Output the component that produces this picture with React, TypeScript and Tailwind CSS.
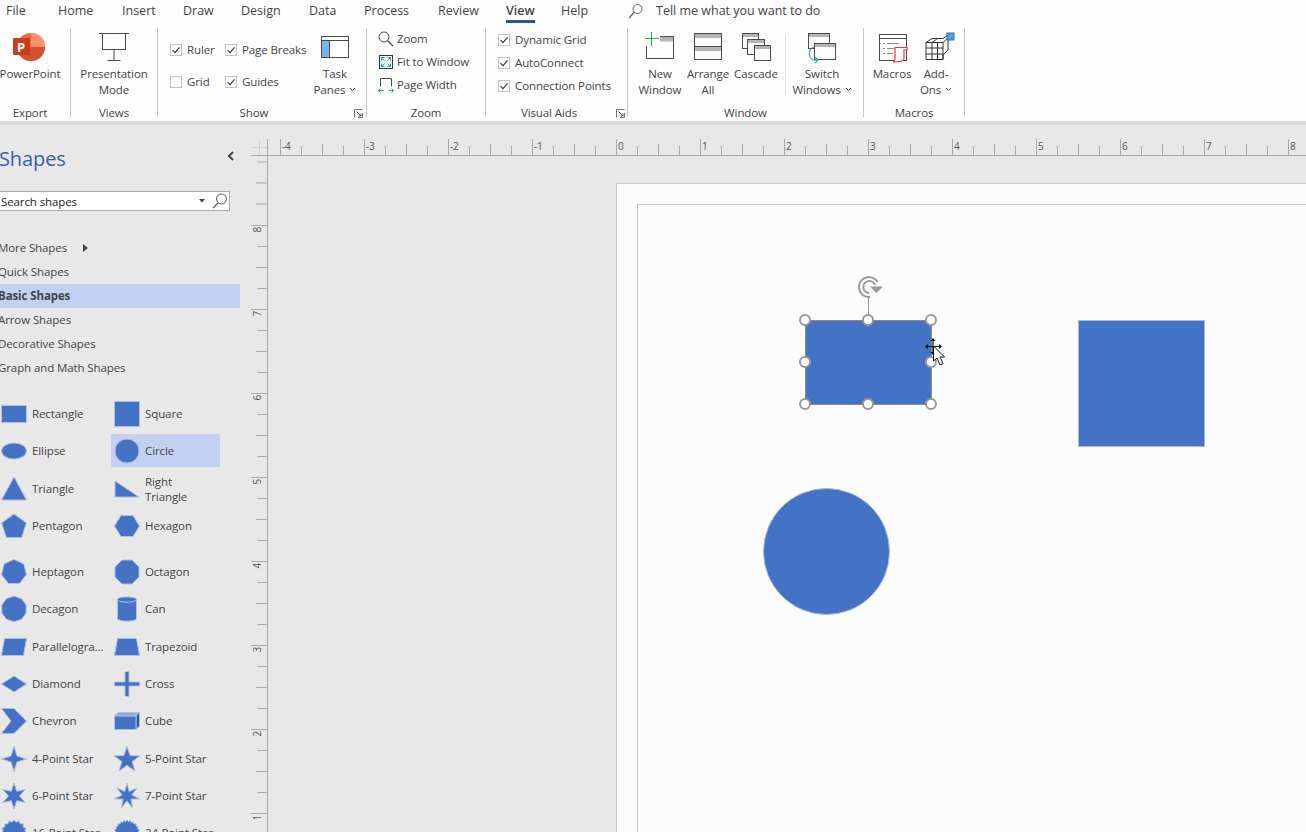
import type { ReactNode } from "react";

const tabs = [
  { name: "File", w: "w-[52px]" },
  { name: "Home", w: "w-[64px]" },
  { name: "Insert", w: "w-[61px]" },
  { name: "Draw", w: "w-[58px]" },
  { name: "Design", w: "w-[68px]" },
  { name: "Data", w: "w-[55px]" },
  { name: "Process", w: "w-[74px]" },
  { name: "Review", w: "w-[68px]" },
  { name: "View", w: "w-[55px]" },
  { name: "Help", w: "w-[67px]" },
];

const INK = "#4a4a4a";

function Sep() {
  return <div className="w-px h-[89px] bg-[#c9c9c9] shrink-0" />;
}

function Check({ on = true, label }: { on?: boolean; label: string }) {
  return (
    <div className="flex items-center gap-[5px] h-[16px] whitespace-nowrap">
      <div className="w-[12px] h-[12px] border border-[#c4c4c4] bg-white flex items-center justify-center shrink-0">
        {on && (
          <svg width="10" height="10" viewBox="0 0 10 10" fill="none">
            <path d="M1.5 5.2 L4 7.6 L8.5 2.4" stroke="#333" strokeWidth="1.1" />
          </svg>
        )}
      </div>
      <span>{label}</span>
    </div>
  );
}

function Chevron() {
  return (
    <svg width="7" height="5" viewBox="0 0 7 5" fill="none" className="inline-block ml-[4px] mb-[2px]">
      <path d="M1 1 L3.5 3.5 L6 1" stroke="#444" strokeWidth="1" />
    </svg>
  );
}

function Launcher() {
  return (
    <svg width="9" height="9" viewBox="0 0 9 9" fill="none" className="shrink-0">
      <path d="M0.5 8.5 V0.5 H8.5 M8.5 4 V8.5 H4" stroke="#777" strokeWidth="1" />
      <path d="M2.5 2.5 L7 7 M7 4.5 V7 H4.5" stroke="#555" strokeWidth="1" />
    </svg>
  );
}

function Large({ w, icon, children }: { w: string; icon: ReactNode; children: ReactNode }) {
  return (
    <div className={`${w} shrink-0 flex flex-col items-center text-center leading-[16px] whitespace-nowrap`}>
      <div className="h-[30px] w-[30px] mt-[4px] mb-[4px] flex items-center justify-center overflow-visible">{icon}</div>
      {children}
    </div>
  );
}

function Icon30({ children }: { children: ReactNode }) {
  return (
    <svg width="30" height="30" viewBox="0 0 30 30" fill="none" className="overflow-visible">
      {children}
    </svg>
  );
}

function Win({ x, y, w, h, bar = 4 }: { x: number; y: number; w: number; h: number; bar?: number }) {
  return (
    <g>
      <rect x={x} y={y} width={w} height={h} fill="#fdfdfd" stroke={INK} />
      <rect x={x + 0.5} y={y + 0.5} width={w - 1} height={bar} fill="#b5b5b5" />
    </g>
  );
}

const shapeFill = "#4472c4";
const shapeLine = "#b3bfd8";

function Poly({ points }: { points: string }) {
  return <polygon points={points} fill={shapeFill} stroke={shapeLine} strokeWidth="1" />;
}

// regular polygon / star outline in the 26x26 stencil box
function ngon(n: number, r: number, cx = 13, cy = 13, start = -90) {
  const out: string[] = [];
  for (let i = 0; i < n; i++) {
    const a = ((start + (360 / n) * i) * Math.PI) / 180;
    out.push(`${(cx + r * Math.cos(a)).toFixed(2)},${(cy + r * Math.sin(a)).toFixed(2)}`);
  }
  return out.join(" ");
}

function star(n: number, r: number, inner: number, cx = 13, cy = 13) {
  const out: string[] = [];
  for (let i = 0; i < n * 2; i++) {
    const a = ((-90 + (180 / n) * i) * Math.PI) / 180;
    const d = i % 2 === 0 ? r : inner;
    out.push(`${(cx + d * Math.cos(a)).toFixed(2)},${(cy + d * Math.sin(a)).toFixed(2)}`);
  }
  return out.join(" ");
}

const shapeIcons: Record<string, ReactNode> = {
  Rectangle: <rect x="0.5" y="4.5" width="25" height="17" fill={shapeFill} stroke={shapeLine} />,
  Square: <rect x="0.5" y="0.5" width="25" height="25" fill={shapeFill} stroke={shapeLine} />,
  Ellipse: <ellipse cx="13" cy="13" rx="12.5" ry="8" fill={shapeFill} stroke={shapeLine} />,
  Circle: <circle cx="13" cy="13" r="12" fill={shapeFill} stroke={shapeLine} />,
  Triangle: <Poly points="13,1 25.5,24 0.5,24" />,
  "Right Triangle": <Poly points="1,5 25,21 1,21" />,
  Pentagon: <Poly points={ngon(5, 13, 13, 14)} />,
  Hexagon: <Poly points="7,2.5 19,2.5 25.5,13 19,23.5 7,23.5 0.5,13" />,
  Heptagon: <Poly points={ngon(7, 12.7)} />,
  Octagon: <Poly points={ngon(8, 13, 13, 13, -67.5)} />,
  Decagon: <Poly points={ngon(10, 12.8)} />,
  Can: (
    <g>
      <path d="M3.5 3.5 C3.5 0 22.5 0 22.5 3.5 V22.5 C22.5 26 3.5 26 3.5 22.5 Z" fill={shapeFill} stroke={shapeLine} />
      <path d="M3.5 3.5 C3.5 7 22.5 7 22.5 3.5" stroke={shapeLine} fill="none" />
    </g>
  ),
  "Parallelogra...": <Poly points="3.5,4.5 25.5,4.5 22.5,21.5 0.5,21.5" />,
  Trapezoid: <Poly points="3.5,4.5 22.5,4.5 25.5,21.5 0.5,21.5" />,
  Diamond: <Poly points="13,5 25.5,13 13,21 0.5,13" />,
  Cross: <Poly points="11,0.5 15,0.5 15,11 25.5,11 25.5,15 15,15 15,25.5 11,25.5 11,15 0.5,15 0.5,11 11,11" />,
  Chevron: <Poly points="0.5,0.5 13,0.5 25.5,13 13,25.5 0.5,25.5 10,13" />,
  Cube: (
    <g>
      <polygon points="0.5,8 4,4.5 25.5,4.5 22,8" fill="#8ea9db" stroke={shapeLine} />
      <polygon points="22,8 25.5,4.5 25.5,18 22,21.5" fill="#2f5597" stroke={shapeLine} />
      <rect x="0.5" y="8" width="21.5" height="13.5" fill={shapeFill} stroke={shapeLine} />
    </g>
  ),
  "4-Point Star": <Poly points="13,0.5 16,10 25.5,13 16,16 13,25.5 10,16 0.5,13 10,10" />,
  "5-Point Star": <Poly points={star(5, 13.5, 5.4, 13, 14)} />,
  "6-Point Star": <Poly points={star(6, 13, 5.5)} />,
  "7-Point Star": <Poly points={star(7, 13, 5)} />,
  "16-Point Star": <Poly points={star(16, 13, 11)} />,
  "24-Point Star": <Poly points={star(24, 13, 11.4)} />,
};

const stencilRows = [
  { mt: "", left: "Rectangle", right: "Square" },
  { mt: "", left: "Ellipse", right: "Circle" },
  { mt: "mt-px", left: "Triangle", right: "Right Triangle" },
  { mt: "", left: "Pentagon", right: "Hexagon" },
  { mt: "mt-[9px]", left: "Heptagon", right: "Octagon" },
  { mt: "", left: "Decagon", right: "Can" },
  { mt: "mt-px", left: "Parallelogra...", right: "Trapezoid" },
  { mt: "", left: "Diamond", right: "Cross" },
  { mt: "", left: "Chevron", right: "Cube" },
  { mt: "mt-px", left: "4-Point Star", right: "5-Point Star" },
  { mt: "", left: "6-Point Star", right: "7-Point Star" },
  { mt: "", left: "16-Point Star", right: "24-Point Star" },
];

function Stencil({ name }: { name: string }) {
  const on = name === "Circle";
  return (
    <div className={`w-[109px] h-[33px] flex items-center pl-[3px] gap-[5px] shrink-0 ${on ? "bg-[#c3d0f1]" : ""}`}>
      <svg width="26" height="26" viewBox="0 0 26 26" className="shrink-0 overflow-visible">
        {shapeIcons[name]}
      </svg>
      <span className={name === "Right Triangle" ? "leading-[15px] w-[50px]" : "whitespace-nowrap"}>{name}</span>
    </div>
  );
}

function TopRuler() {
  const labels = [-4, -3, -2, -1, 0, 1, 2, 3, 4, 5, 6, 7, 8];
  return (
    <svg width="1056" height="31" viewBox="0 0 1056 31" className="block shrink-0">
      <path d="M9.5 14 V30 M2 22.5 H17" stroke="#d2d2d2" />
      <path d="M1 30.5 H1056 M17.5 14 V30" stroke="#a9a9a9" />
      {labels.map((n) => {
        const x = 366.5 + n * 84;
        return (
          <g key={n}>
            <path d={`M${x} 14 V30 M${x + 21} 21 V30 M${x + 42} 19 V30 M${x + 63} 21 V30`} stroke="#a9a9a9" />
            <text x={x + 1.5} y="25" className="text-[10px] fill-[#555]">
              {n}
            </text>
          </g>
        );
      })}
    </svg>
  );
}

function SideRuler() {
  const labels = [8, 7, 6, 5, 4, 3, 2, 1];
  return (
    <svg width="18" height="676" viewBox="0 0 18 676" className="block shrink-0">
      <path d="M17.5 0 V676" stroke="#a9a9a9" />
      <path d="M8 6 H17 M6 27 H17 M6 48 H17" stroke="#a9a9a9" />
      {labels.map((n) => {
        const y = 69.5 + (8 - n) * 84;
        return (
          <g key={n}>
            <path d={`M1 ${y} H17 M8 ${y + 21} H17 M6 ${y + 42} H17 M8 ${y + 63} H17`} stroke="#a9a9a9" />
            <text transform={`translate(11 ${y + 7}) rotate(-90)`} className="text-[10px] fill-[#555]">
              {n}
            </text>
          </g>
        );
      })}
    </svg>
  );
}

function Handle({ x, y }: { x: number; y: number }) {
  return <circle cx={x} cy={y} r="5" fill="#fff" stroke="#999" strokeWidth="2" />;
}

// shapes on the drawing page, in screen coordinates
function Drawing() {
  return (
    <svg width="668" height="627" viewBox="638 205 668 627" className="absolute left-0 top-0">
      <rect x="1078.5" y="320.5" width="126" height="126" fill={shapeFill} stroke="#a9bbdc" />
      <circle cx="826.5" cy="551.5" r="63" fill={shapeFill} stroke="#a9bbdc" />
      <rect x="805.5" y="320.5" width="126" height="84" fill={shapeFill} stroke="#8c8c8c" strokeWidth="1" />
      <path d="M868.5 296 V316" stroke="#999" />
      <path d="M877.5 282 A10 10 0 1 0 870 297" stroke="#999" strokeWidth="2" fill="none" />
      <path d="M875 285 A6 6 0 1 0 869 293" stroke="#999" strokeWidth="2" fill="none" />
      <path d="M870 286.5 H883 L876.5 293 Z" fill="#999" />
      <Handle x={805} y={320} />
      <Handle x={868} y={320} />
      <Handle x={931} y={320} />
      <Handle x={805} y={362} />
      <Handle x={931} y={362} />
      <Handle x={805} y={404} />
      <Handle x={868} y={404} />
      <Handle x={931} y={404} />
      {/* move cursor */}
      <path d="M933 339 V354 M925.5 346.5 H941" stroke="#111" strokeWidth="1.2" />
      <path d="M933 338 L935.5 341 H930.5 Z M933 355 L935.5 352 H930.5 Z M925 346.5 L928 344 V349 Z M942 346.5 L939 344 V349 Z" fill="#111" />
      <path d="M933.5 346 V361 L937 358 L940 365 L943 363.5 L940 357 H944.5 Z" fill="#fff" stroke="#111" strokeWidth="1" />
    </svg>
  );
}

export default function App() {
  return (
    <div className="w-[1306px] h-[832px] overflow-hidden bg-[#e8e8e8] flex flex-col text-[11.5px] tracking-[-0.1px] text-[#444] font-['Open_Sans',sans-serif]">
      {/* Ribbon */}
      <div className="h-[121px] bg-[#fdfdfd] shrink-0">
        <div className="h-[28px] flex pl-[6px] pt-px text-[12.5px] tracking-normal">
          {tabs.map((t) => (
            <div key={t.name} className={`${t.w} shrink-0`}>
              {t.name === "View" ? (
                <div className="inline-block h-[22px] leading-[20px] font-semibold border-b-[3px] border-[#2f5297]">{t.name}</div>
              ) : (
                <div className="leading-[20px]">{t.name}</div>
              )}
            </div>
          ))}
          <div className="w-[28px] pt-[2px]">
            <svg width="16" height="16" viewBox="0 0 16 16" fill="none">
              <circle cx="9.5" cy="6" r="4.5" stroke="#666" />
              <path d="M6 9.5 L1 15" stroke="#666" strokeWidth="1.2" />
            </svg>
          </div>
          <div className="leading-[20px]">Tell me what you want to do</div>
        </div>

        <div className="flex h-[93px]">
          {/* Export */}
          <div className="w-[70px] shrink-0 flex flex-col">
            <div className="h-[77px] w-[60px]">
              <Large
                w="w-[60px]"
                icon={
                  <svg width="34" height="30" viewBox="0 0 34 30" className="overflow-visible ml-[2px]">
                    <circle cx="17" cy="15" r="14" fill="#ed6c47" />
                    <path d="M17 15 V1 A14 14 0 0 1 31 15 Z" fill="#ff8f6b" />
                    <path d="M31 15 A14 14 0 0 1 3 15 Z" fill="#d35230" />
                    <rect x="-1" y="6" width="17" height="17" rx="1" fill="#c43e1c" />
                    <text x="3" y="19.5" className="text-[13px] font-bold fill-white">
                      P
                    </text>
                  </svg>
                }
              >
                <span>PowerPoint</span>
              </Large>
            </div>
            <div className="h-[16px] w-[60px] leading-[16px] text-center">Export</div>
          </div>
          <Sep />

          {/* Views */}
          <div className="w-[86px] shrink-0 flex flex-col">
            <div className="h-[77px]">
              <Large
                w="w-[86px]"
                icon={
                  <Icon30>
                    <path d="M0 1.5 H30 M3.5 1.5 V17.5 H26.5 V1.5 M15 17.5 V28.5 M8.5 28.5 H21.5" stroke={INK} />
                  </Icon30>
                }
              >
                <span>Presentation</span>
                <span>Mode</span>
              </Large>
            </div>
            <div className="h-[16px] leading-[16px] text-center">Views</div>
          </div>
          <Sep />

          {/* Show */}
          <div className="w-[208px] shrink-0 flex flex-col">
            <div className="h-[77px] flex">
              <div className="grid grid-cols-[55px_96px] gap-y-[16px] pl-[12px] pt-[14px] content-start shrink-0">
                <Check label="Ruler" />
                <Check label="Page Breaks" />
                <Check on={false} label="Grid" />
                <Check label="Guides" />
              </div>
              <Large
                w="w-[44px] -ml-[8px]"
                icon={
                  <Icon30>
                    <rect x="1.5" y="4.5" width="27" height="21" fill="#fff" stroke={INK} />
                    <path d="M1.5 8.5 H28.5" stroke={INK} />
                    <rect x="2" y="9" width="7" height="16" fill="#7cb4ea" />
                    <path d="M9.5 9 V25" stroke={INK} />
                  </Icon30>
                }
              >
                <span>Task</span>
                <span>
                  Panes
                  <Chevron />
                </span>
              </Large>
            </div>
            <div className="h-[16px] flex items-center">
              <div className="w-[192px] leading-[16px] text-center">Show</div>
              <div className="ml-[4px]">
                <Launcher />
              </div>
            </div>
          </div>
          <Sep />

          {/* Zoom */}
          <div className="w-[118px] shrink-0 flex flex-col">
            <div className="h-[77px] pl-[11px]">
              <div className="h-[23px] -mt-px flex items-center gap-[3px]">
                <svg width="16" height="16" viewBox="0 0 16 16" fill="none">
                  <circle cx="6" cy="6" r="5" stroke={INK} />
                  <path d="M9.5 9.5 L15 15" stroke={INK} strokeWidth="1.3" />
                </svg>
                <span>Zoom</span>
              </div>
              <div className="h-[23px] flex items-center gap-[3px]">
                <svg width="16" height="16" viewBox="0 0 16 16" fill="none">
                  <rect x="1.5" y="1.5" width="13" height="13" stroke="#333" />
                  <path d="M3.5 6.5 V3.5 H6.5 M3.5 3.5 L6.5 6.5 M9.5 3.5 H12.5 V6.5 M12.5 3.5 L9.5 6.5 M3.5 9.5 V12.5 H6.5 M3.5 12.5 L6.5 9.5 M9.5 12.5 H12.5 V9.5 M12.5 12.5 L9.5 9.5" stroke="#2f8fd8" />
                </svg>
                <span>Fit to Window</span>
              </div>
              <div className="h-[23px] flex items-center gap-[3px]">
                <svg width="16" height="16" viewBox="0 0 16 16" fill="none">
                  <path d="M2.5 9.5 V1.5 H13.5 V9.5" stroke={INK} />
                  <path d="M0.5 13.5 H5.5 M0.5 13.5 L2.5 11.5 M0.5 13.5 L2.5 15.5 M10.5 13.5 H15.5 M15.5 13.5 L13.5 11.5 M15.5 13.5 L13.5 15.5" stroke="#2f8fd8" />
                </svg>
                <span>Page Width</span>
              </div>
            </div>
            <div className="h-[16px] leading-[16px] text-center">Zoom</div>
          </div>
          <Sep />

          {/* Visual Aids */}
          <div className="w-[141px] shrink-0 flex flex-col">
            <div className="h-[77px] pl-[12px] pt-[4px] flex flex-col gap-[7px]">
              <Check label="Dynamic Grid" />
              <Check label="AutoConnect" />
              <Check label="Connection Points" />
            </div>
            <div className="h-[16px] flex items-center">
              <div className="w-[126px] leading-[16px] text-center">Visual Aids</div>
              <div className="ml-[4px]">
                <Launcher />
              </div>
            </div>
          </div>
          <Sep />

          {/* Window */}
          <div className="w-[235px] shrink-0 flex flex-col">
            <div className="h-[77px] flex pl-[8px]">
              <Large
                w="w-[48px]"
                icon={
                  <Icon30>
                    <path d="M15 4.5 H28.5 V26.5 H1.5 V14" stroke={INK} />
                    <rect x="15" y="5" width="13" height="4.5" fill="#b5b5b5" />
                    <path d="M6.5 0 V14 M0 6.5 H14" stroke="#3aa655" strokeWidth="1.2" />
                  </Icon30>
                }
              >
                <span>New</span>
                <span>Window</span>
              </Large>
              <Large
                w="w-[48px]"
                icon={
                  <Icon30>
                    <Win x={1.5} y={1.5} w={27} h={13} />
                    <Win x={1.5} y={14.5} w={27} h={13} />
                  </Icon30>
                }
              >
                <span>Arrange</span>
                <span>All</span>
              </Large>
              <Large
                w="w-[48px]"
                icon={
                  <Icon30>
                    <Win x={1.5} y={1.5} w={16} h={15} bar={3} />
                    <Win x={6.5} y={7.5} w={17} h={15} bar={3} />
                    <Win x={13.5} y={13.5} w={16} h={15} bar={3} />
                  </Icon30>
                }
              >
                <span>Cascade</span>
              </Large>
              <div className="w-px h-[59px] mt-[7px] ml-[5px] mr-[4px] bg-[#e1e1e1]" />
              <Large
                w="w-[64px]"
                icon={
                  <Icon30>
                    <Win x={1.5} y={1.5} w={21} h={15} bar={3} />
                    <Win x={7.5} y={11.5} w={21} h={16} bar={3} />
                    <path d="M7 15 A6.5 7 0 0 0 6 28 L10 28 M8 25 L11 28 L8 31" stroke="#3f9bd9" strokeWidth="1.2" fill="none" />
                  </Icon30>
                }
              >
                <span>Switch</span>
                <span>
                  Windows
                  <Chevron />
                </span>
              </Large>
            </div>
            <div className="h-[16px] leading-[16px] text-center">Window</div>
          </div>
          <Sep />

          {/* Macros */}
          <div className="w-[100px] shrink-0 flex flex-col">
            <div className="h-[77px] flex pl-[3px]">
              <Large
                w="w-[50px]"
                icon={
                  <Icon30>
                    <rect x="2.5" y="2.5" width="27" height="26" fill="#fff" stroke={INK} />
                    <path d="M2.5 6.5 H29.5" stroke={INK} />
                    <path d="M6 11.5 H8 M10 11.5 H22 M6 16.5 H8 M10 16.5 H17 M6 21.5 H8 M10 21.5 H16" stroke="#8a8a8a" />
                    <path d="M18 15.5 H30 V18 H27 V27 C27 30 17 30 16 30 C18 29.5 18 28 18 27 Z" fill="#fff" stroke="#e03c3c" strokeWidth="1.2" />
                  </Icon30>
                }
              >
                <span>Macros</span>
              </Large>
              <Large
                w="w-[38px]"
                icon={
                  <Icon30>
                    <path d="M5 10.5 L11 6.5 H22 L27 3 V18 L22 23 V27.5 H5 Z" fill="#fff" stroke="#333" />
                    <path d="M5 10.5 H22 V27.5 M5 16 H22 M5 22 H22 M11 10.5 V27.5 M16.5 10.5 V27.5 M22 10.5 L27 6 M11 10.5 L16.5 6.5" stroke="#333" />
                    <rect x="26" y="1" width="7" height="7" fill="#5b9bd5" stroke="#2f6fb0" />
                  </Icon30>
                }
              >
                <span>Add-</span>
                <span>
                  Ons
                  <Chevron />
                </span>
              </Large>
            </div>
            <div className="h-[16px] leading-[16px] text-center">Macros</div>
          </div>
          <Sep />
        </div>
      </div>
      <div className="h-[4px] bg-[#d9d9d9] shrink-0" />

      {/* Body */}
      <div className="flex-1 flex min-h-0">
        {/* Shapes pane */}
        <div className="w-[250px] shrink-0 overflow-hidden">
          <div className="w-[240px] h-[34px] mt-[17px] flex justify-between">
            <div className="text-[20px] leading-[34px] text-[#3560ae] -ml-[1px]">Shapes</div>
            <svg width="10" height="10" viewBox="0 0 10 10" fill="none" className="mt-[9px] mr-[4px]">
              <path d="M7 1 L3 5 L7 9" stroke="#444" strokeWidth="2" />
            </svg>
          </div>
          <div className="w-[231px] h-[20px] mt-[15px] -ml-px border border-[#ababab] bg-white flex items-center text-[#222]">
            <span className="ml-[1px] flex-1 leading-[17px]">Search shapes</span>
            <svg width="6" height="4" viewBox="0 0 6 4" className="mr-[7px]">
              <path d="M0 0 H6 L3 3.5 Z" fill="#444" />
            </svg>
            <svg width="16" height="16" viewBox="0 0 16 16" fill="none" className="mr-[1px]">
              <circle cx="9.5" cy="6" r="5" stroke="#555" />
              <path d="M6 10 L1 15" stroke="#555" strokeWidth="1.2" />
            </svg>
          </div>
          <div className="mt-[25px] w-[240px]">
            <div className="h-[24px] leading-[24px] flex items-center -ml-[2px]">
              <span>More Shapes</span>
              <svg width="5" height="8" viewBox="0 0 5 8" className="ml-[16px]">
                <path d="M0 0 L5 4 L0 8 Z" fill="#444" />
              </svg>
            </div>
            <div className="h-[24px] leading-[24px] -ml-[2px]">Quick Shapes</div>
            <div className="h-[24px] leading-[24px] bg-[#c3d0f1] font-bold">
              <span className="-ml-[2px] block">Basic Shapes</span>
            </div>
            <div className="h-[24px] leading-[24px] -ml-[2px]">Arrow Shapes</div>
            <div className="h-[24px] leading-[24px] -ml-[2px]">Decorative Shapes</div>
            <div className="h-[24px] leading-[24px] -ml-[2px]">Graph and Math Shapes</div>
          </div>
          <div className="mt-[15px] -ml-[2px]">
            {stencilRows.map((r) => (
              <div key={r.left} className={`${r.mt} h-[37px] flex items-center gap-[4px]`}>
                <Stencil name={r.left} />
                <Stencil name={r.right} />
              </div>
            ))}
          </div>
        </div>

        {/* Rulers and page */}
        <div className="flex-1 flex flex-col min-w-0">
          <TopRuler />
          <div className="flex-1 flex min-h-0">
            <SideRuler />
            <div className="flex-1 overflow-hidden pl-[348px] pt-[27px]">
              <div className="w-[700px] h-[700px] bg-[#fcfcfc] border-l border-t border-[#c8c8c8] pl-[20px] pt-[20px]">
                <div className="relative w-[680px] h-[680px] border-l border-t border-[#c8c8c8]">
                  <Drawing />
                </div>
              </div>
            </div>
          </div>
        </div>
      </div>
    </div>
  );
}
